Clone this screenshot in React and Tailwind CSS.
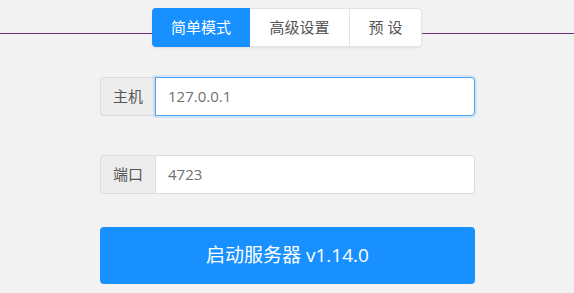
import React from "react";

export default function App() {
  const font = { fontFamily: '"Open Sans", "Noto Sans CJK SC", sans-serif' };
  return (
    <div className="w-[574px] h-[293px] bg-[#f2f2f2] overflow-hidden" style={font}>
      <div className="flex items-start pt-[8px]">
        <div className="flex-1 h-px bg-[#6f2f85] mt-[25px]" />
        <div className="flex h-[39px] rounded-[4px] shadow-[0_1px_2px_rgba(0,0,0,0.08)]">
          <div className="w-[98px] flex items-center justify-center bg-[#1890ff] text-white text-[15px] rounded-l-[4px]">简单模式</div>
          <div className="w-[99px] flex items-center justify-center bg-white text-[#555] text-[15px] border-y border-[#e3e3e3]">高级设置</div>
          <div className="w-[73px] flex items-center justify-center bg-white text-[#555] text-[15px] border border-[#e3e3e3] rounded-r-[4px]">预 设</div>
        </div>
        <div className="flex-1 h-px bg-[#6f2f85] mt-[25px]" />
      </div>

      <div className="pl-[100px] pr-[99px] pt-[30px] flex flex-col">
        <div className="flex h-[39px]">
          <div className="w-[55px] flex items-center justify-center bg-[#ededed] border border-r-0 border-[#dcdcdc] rounded-l-[4px] text-[15px] text-[#555]">主机</div>
          <div className="flex-1 flex items-center bg-white border border-[#4aa3f5] rounded-r-[4px] shadow-[0_0_0_2px_rgba(24,144,255,0.15)] pl-[12px] text-[15px] text-[#707070]">127.0.0.1</div>
        </div>

        <div className="flex h-[39px] mt-[39px]">
          <div className="w-[55px] flex items-center justify-center bg-[#ededed] border border-r-0 border-[#dcdcdc] rounded-l-[4px] text-[15px] text-[#555]">端口</div>
          <div className="flex-1 flex items-center bg-white border border-[#dcdcdc] rounded-r-[4px] pl-[12px] text-[15px] text-[#707070]">4723</div>
        </div>

        <div className="mt-[33px] h-[57px] bg-[#1890ff] rounded-[4px] flex items-center justify-center text-white text-[19px]">
          启动服务器 v1.14.0
        </div>
      </div>
    </div>
  );
}
